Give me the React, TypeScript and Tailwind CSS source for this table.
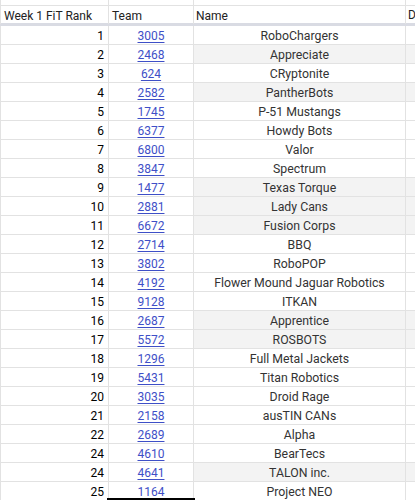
const ROWS: [string, string, string, boolean][] = [
  ["1", "3005", "RoboChargers", false],
  ["2", "2468", "Appreciate", true],
  ["3", "624", "CRyptonite", false],
  ["4", "2582", "PantherBots", true],
  ["5", "1745", "P-51 Mustangs", false],
  ["6", "6377", "Howdy Bots", false],
  ["7", "6800", "Valor", false],
  ["8", "3847", "Spectrum", false],
  ["9", "1477", "Texas Torque", true],
  ["10", "2881", "Lady Cans", true],
  ["11", "6672", "Fusion Corps", true],
  ["12", "2714", "BBQ", false],
  ["13", "3802", "RoboPOP", false],
  ["14", "4192", "Flower Mound Jaguar Robotics", false],
  ["15", "9128", "ITKAN", false],
  ["16", "2687", "Apprentice", true],
  ["17", "5572", "ROSBOTS", true],
  ["18", "1296", "Full Metal Jackets", false],
  ["19", "5431", "Titan Robotics", false],
  ["20", "3035", "Droid Rage", false],
  ["21", "2158", "ausTIN CANs", false],
  ["22", "2689", "Alpha", false],
  ["24", "4610", "BearTecs", false],
  ["24", "4641", "TALON inc.", true],
  ["25", "1164", "Project NEO", false],
];

// sheets cells are bottom aligned
const cell = "h-[18px] flex items-end leading-[13px] pb-[1px] border-r border-[#e2e2e2] shrink-0";

export default function App() {
  return (
    <div className="relative w-[415px] h-[500px] overflow-hidden bg-white text-[12px] text-[#222] font-['Roboto',Arial,sans-serif]">
      <div className="flex h-[6px] border-b border-[#e2e2e2]">
        <div className="w-[109px] border-x border-[#e2e2e2]" />
        <div className="w-[85px] border-r border-[#e2e2e2]" />
        <div className="w-[212px] border-r border-[#e2e2e2]" />
      </div>

      <div className="flex h-[17px]">
        <div className={`${cell} h-[17px] w-[109px] pl-[3px] border-l`}>Week 1 FiT Rank</div>
        <div className={`${cell} h-[17px] w-[85px] pl-[3px]`}>Team</div>
        <div className={`${cell} h-[17px] w-[212px] pl-[2px]`}>Name</div>
        <div className="h-[17px] flex items-end leading-[13px] pb-[1px] pl-[2px]">D</div>
      </div>
      <div className="h-[3px] bg-[#d9dbe3]" />

      {ROWS.map(([rank, team, name, shaded], i) => (
        <div key={i} className="flex h-[19px] border-b border-[#e2e2e2]">
          <div className={`${cell} w-[109px] justify-end pr-[4px] border-l text-black`}>{rank}</div>
          <div className={`${cell} w-[85px] justify-center`}>
            <span className="text-[#3e4fc7] underline underline-offset-[2px]">{team}</span>
          </div>
          <div
            className={`${cell} w-[212px] justify-center text-[12.3px] text-[#333] ${
              shaded ? "bg-[#f3f3f3]" : ""
            }`}
          >
            {name}
          </div>
          <div className={`h-[18px] flex-1 ${shaded ? "bg-[#f3f3f3]" : ""}`} />
        </div>
      ))}

      {/* selected cell outline */}
      <div className="absolute left-[107px] top-[498px] w-[88px] h-[2px] bg-black" />
    </div>
  );
}
